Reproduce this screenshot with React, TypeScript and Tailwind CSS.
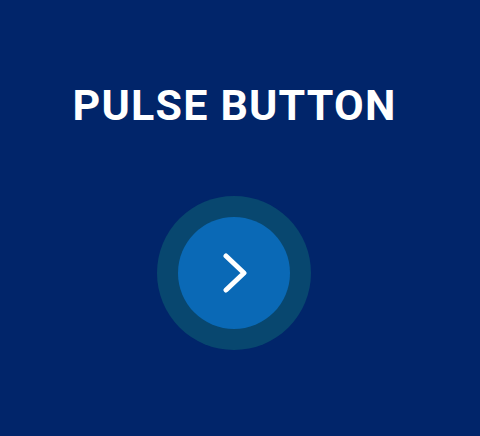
import React from 'react';

const ChevronRight = () => (
  <svg width="24" height="40" viewBox="0 0 24 40" fill="none" className="block">
    <path d="M3 3 L21 20 L3 37" stroke="white" strokeWidth="5" strokeLinecap="round" strokeLinejoin="round" />
  </svg>
);

export default function App() {
  return (
    <div className="w-[480px] h-[436px] bg-[#01256a] overflow-hidden" style={{ fontFamily: 'Roboto, "Liberation Sans", sans-serif' }}>
      <div className="w-[468px] flex flex-col items-center">
        <h1 className="mt-[77px] pl-[1px] text-[43px] leading-[56px] font-bold text-white tracking-[1.2px]">PULSE BUTTON</h1>
        <div className="mt-[63px] w-[154px] h-[154px] rounded-full bg-[#08476f] flex items-center justify-center">
          <button className="w-[112px] h-[112px] rounded-full bg-[#0a69b6] flex items-center justify-center pl-[2px]">
            <ChevronRight />
          </button>
        </div>
      </div>
    </div>
  );
}
